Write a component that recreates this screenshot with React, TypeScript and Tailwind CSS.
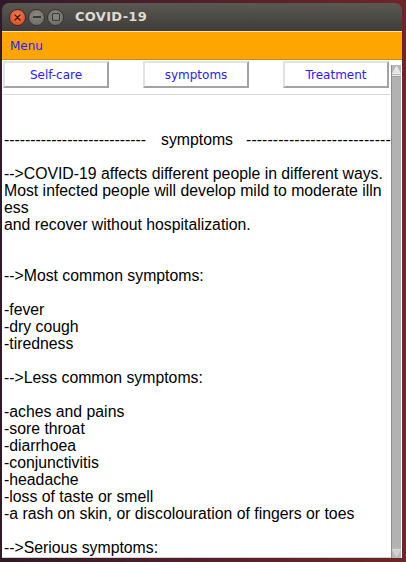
const lines: string[] = [
  "",
  "",
  "DIVIDER",
  "",
  "-->COVID-19 affects different people in different ways.",
  "Most infected people will develop mild to moderate illn",
  "ess",
  "and recover without hospitalization.",
  "",
  "",
  "-->Most common symptoms:",
  "",
  "-fever",
  "-dry cough",
  "-tiredness",
  "",
  "-->Less common symptoms:",
  "",
  "-aches and pains",
  "-sore throat",
  "-diarrhoea",
  "-conjunctivitis",
  "-headache",
  "-loss of taste or smell",
  "-a rash on skin, or discolouration of fingers or toes",
  "",
  "-->Serious symptoms:",
];

const tabs = ["Self-care", "symptoms", "Treatment"];

function TitleButton({ kind }: { kind: "close" | "min" | "max" }) {
  if (kind === "close") {
    return (
      <span className="flex h-[17px] w-[17px] items-center justify-center rounded-full border border-[#3a2a22] bg-[radial-gradient(circle_at_50%_35%,#f27a50,#d9461e)]">
        <svg width="7" height="7" viewBox="0 0 7 7" aria-hidden>
          <path d="M1 1 L6 6 M6 1 L1 6" stroke="#3b1a10" strokeWidth="1.3" strokeLinecap="round" />
        </svg>
      </span>
    );
  }
  return (
    <span className="flex h-[17px] w-[17px] items-center justify-center rounded-full border border-[#34332f] bg-[radial-gradient(circle_at_50%_35%,#8a8882,#6a6863)]">
      {kind === "min" ? (
        <span className="h-[1.5px] w-[8px] bg-[#3a3935]" />
      ) : (
        <span className="h-[8px] w-[8px] rounded-[1px] border-[1.5px] border-[#3a3935]" />
      )}
    </span>
  );
}

function Scrollbar() {
  return (
    <div className="flex h-full w-[10px] flex-col border-l border-[#8c8c8c] bg-[#b3b3b3]">
      <div className="flex h-[11px] items-start justify-center border-b border-[#e8e8e8] bg-[#b8b8b8] pt-[1px]">
        <svg width="9" height="8" viewBox="0 0 9 8" aria-hidden>
          <path d="M4.5 0.5 L8.5 7.5 L0.5 7.5 Z" fill="#e4e4e4" stroke="#f5f5f5" strokeWidth="0.8" />
        </svg>
      </div>
      <div className="flex-1 border-t border-[#a0a0a0] bg-[#b2b2b2]" />
      <div className="flex h-[11px] items-end justify-center bg-[#b8b8b8] pb-[1px]">
        <svg width="9" height="8" viewBox="0 0 9 8" aria-hidden>
          <path d="M0.5 0.5 L8.5 0.5 L4.5 7.5 Z" fill="#cfcfcf" stroke="#e0e0e0" strokeWidth="0.8" />
        </svg>
      </div>
    </div>
  );
}

function Divider() {
  return (
    <div className="flex h-[17px] whitespace-pre">
      <span>{"---------------------------"}</span>
      <span className="ml-[15px]">symptoms</span>
      <span className="ml-[13px] tracking-[0.1px]">{"---------------------------"}</span>
    </div>
  );
}

export default function App() {
  return (
    <div className="h-[562px] w-[406px] overflow-hidden bg-[linear-gradient(90deg,#2f1a27_0%,#4d1f2b_40%,#6e2627_100%)] pl-[2px] pt-[3px]">
      <div className="flex h-[555px] w-[400px] flex-col">
        <div className="flex h-[28px] shrink-0 items-center gap-[2px] rounded-t-[7px] bg-[linear-gradient(180deg,#5a5853,#3e3d39)] pl-[7px]">
          <TitleButton kind="close" />
          <TitleButton kind="min" />
          <TitleButton kind="max" />
          <span className="ml-[9px] font-['DejaVu_Sans',sans-serif] text-[13px] font-bold tracking-[0.3px] text-[#dfdbd2]">
            COVID-19
          </span>
        </div>
        <div className="flex h-[29px] shrink-0 items-center border-t border-[#f6deb0] border-b border-b-[#c98a1a] bg-[#ffa500] pl-[8px] font-['DejaVu_Sans',sans-serif] text-[12px] text-[#2a20ff]">
          Menu
        </div>
        <div className="flex min-h-0 flex-1 bg-white">
          <div className="flex min-w-0 flex-1 flex-col border-b border-[#d0d0d0] pl-[1px]">
            <div className="flex h-[34px] shrink-0 gap-[34px] pt-[1px]">
              {tabs.map((t) => (
                <div
                  key={t}
                  className="flex h-[27px] w-[106px] items-center justify-center border-2 border-t-[#e2e2e2] border-l-[#e2e2e2] border-r-[#a3a3a3] border-b-[#a3a3a3] bg-white font-['DejaVu_Sans',sans-serif] text-[12px] text-[#2a20ff]"
                >
                  {t}
                </div>
              ))}
            </div>
            <div className="h-px w-[387px] shrink-0 bg-[#d9d9d9]" />
            <div className="min-h-0 flex-1 overflow-hidden pl-[1px] pt-[2px] font-['Liberation_Sans',Arial,sans-serif] text-[15.8px] leading-[17px] text-black">
              {lines.map((l, i) =>
                l === "DIVIDER" ? (
                  <Divider key={i} />
                ) : (
                  <div key={i} className="h-[17px] whitespace-pre">
                    {l}
                  </div>
                ),
              )}
            </div>
          </div>
          <div className="flex w-[11px] shrink-0 flex-col pt-[5px]">
            <Scrollbar />
          </div>
        </div>
      </div>
    </div>
  );
}
